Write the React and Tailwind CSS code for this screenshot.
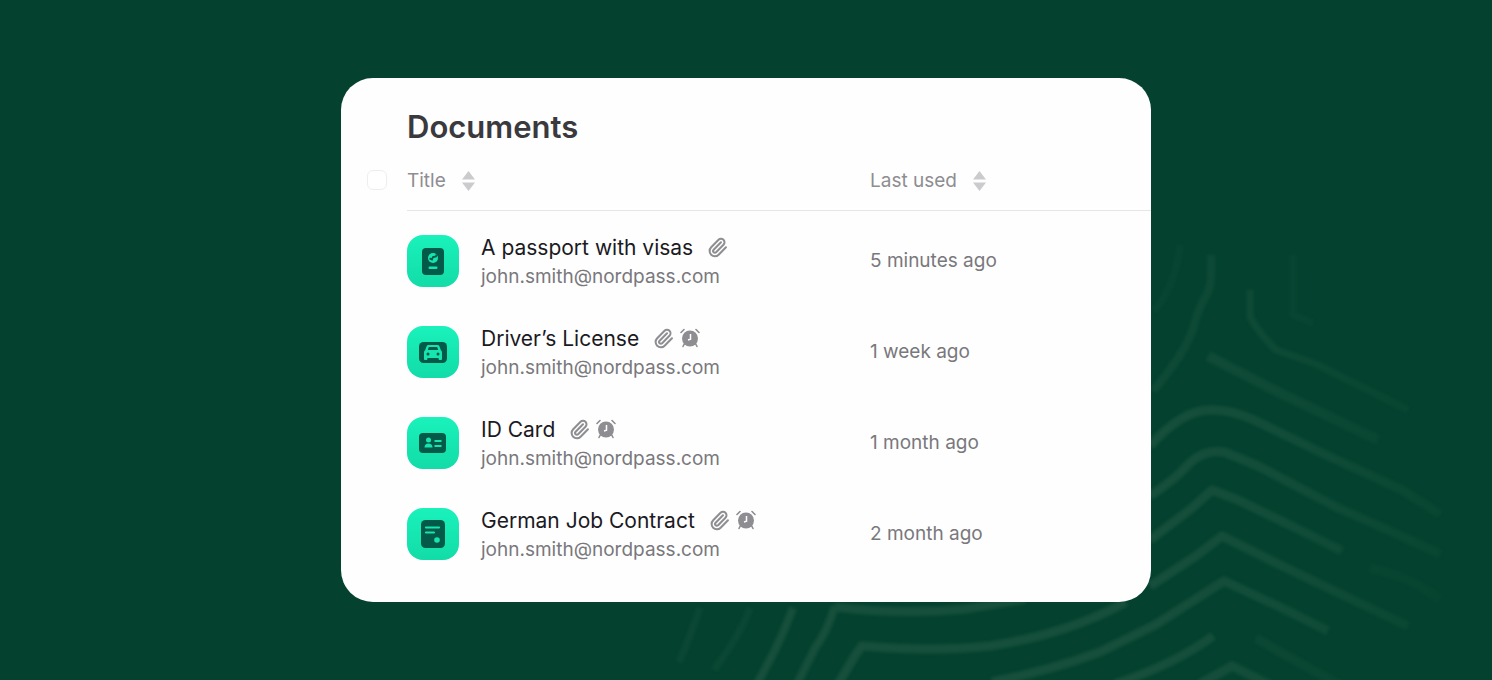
import React from 'react';
import { Paperclip } from 'lucide-react';

const documents = [
    { id: 1, kind: 'passport', title: 'A passport with visas', email: 'john.smith@nordpass.com', lastUsed: '5 minutes ago', reminder: false },
    { id: 2, kind: 'license', title: 'Driver’s License', email: 'john.smith@nordpass.com', lastUsed: '1 week ago', reminder: true },
    { id: 3, kind: 'id', title: 'ID Card', email: 'john.smith@nordpass.com', lastUsed: '1 month ago', reminder: true },
    { id: 4, kind: 'contract', title: 'German Job Contract', email: 'john.smith@nordpass.com', lastUsed: '2 month ago', reminder: true },
];

const glyphs = {
    passport: (
        <>
            <rect x="15" y="13" width="22" height="27" rx="4" fill="#045a49" />
            <circle cx="26" cy="23" r="5" fill="#17e5b0" />
            <path d="M22.6 23.4l2.4 1.2 1-2.6 3-.6.6-2" fill="none" stroke="#045a49" strokeWidth="1.8" />
            <rect x="21.5" y="31.5" width="9" height="2.4" rx="1.2" fill="#17e5b0" />
        </>
    ),
    license: (
        <>
            <rect x="12" y="16" width="28" height="21" rx="4.5" fill="#045a49" />
            <path
                fillRule="evenodd"
                fill="#17e5b0"
                d="M21.5 19h9a2 2 0 0 1 1.9 1.3l1.5 4c.8.5 1.1 1.2 1.1 2.2V33a1 1 0 0 1-1 1h-1.4a1 1 0 0 1-1-1v-1H20.4v1a1 1 0 0 1-1 1H18a1 1 0 0 1-1-1v-6.5c0-1 .3-1.7 1.1-2.2l1.5-4A2 2 0 0 1 21.5 19zm.3 2-1 3h10.4l-1-3zM21 26.5a1.5 1.5 0 1 0 0 3 1.5 1.5 0 0 0 0-3zm10 0a1.5 1.5 0 1 0 0 3 1.5 1.5 0 0 0 0-3z"
            />
        </>
    ),
    id: (
        <>
            <rect x="12" y="16" width="27" height="20" rx="4" fill="#045a49" />
            <circle cx="21.5" cy="23" r="2.5" fill="#17e5b0" />
            <path d="M17.5 30.5c0-2.6 1.6-4 4-4s4 1.4 4 4z" fill="#17e5b0" />
            <path d="M27.5 24h7M27.5 29h7" stroke="#17e5b0" strokeWidth="2.2" />
        </>
    ),
    contract: (
        <>
            <rect x="14" y="12" width="24" height="28" rx="4.5" fill="#045a49" />
            <path d="M19 19.5h13M19 24.5h8" stroke="#17e5b0" strokeWidth="2.2" strokeLinecap="round" />
            <circle cx="30" cy="32" r="2.8" fill="#17e5b0" />
        </>
    ),
};

const DocumentIcon = ({ kind }) => (
    <div className="size-[52px] shrink-0 rounded-2xl bg-gradient-to-b from-[#1af2bb] to-[#12dca8]">
        <svg viewBox="0 0 52 52" className="size-full" aria-hidden="true">
            {glyphs[kind]}
        </svg>
    </div>
);

const AlarmIcon = () => (
    <svg viewBox="0 0 20 20" className="size-5" aria-hidden="true">
        <circle cx="10" cy="10.5" r="8" fill="#8e8d91" />
        <path d="M4.5 15.5 3 18.5M15.5 15.5l1.5 3M1 4.5l3-3M19 4.5l-3-3" stroke="#8e8d91" strokeWidth="1.6" strokeLinecap="round" />
        <path d="M10.5 6v5.3L8 12" fill="none" stroke="#fff" strokeWidth="1.5" />
    </svg>
);

const SortButton = ({ label }) => (
    <button type="button" className="flex items-center gap-4 text-[19px] leading-6 text-[#8e8d91]">
        {label}
        <svg viewBox="0 0 13 20" className="h-5 w-[13px]" fill="#cbcacd" aria-hidden="true">
            <path d="M6.5 0 13 8.5H0zM6.5 20 0 11.5h13z" />
        </svg>
    </button>
);

const DocumentRow = ({ doc }) => (
    <tr className="h-[91px]">
        <td />
        <td>
            <div className="flex items-center gap-[22px]">
                <DocumentIcon kind={doc.kind} />
                <div className="pt-0.5">
                    <div className="flex items-center gap-3.5">
                        <span className="text-[21px] leading-[29px] text-[#1b1a1e]">{doc.title}</span>
                        <div className="flex items-center gap-1.5 text-[#8e8d91]">
                            <Paperclip size={21} strokeWidth={2.3} aria-hidden="true" />
                            {doc.reminder && <AlarmIcon />}
                        </div>
                    </div>
                    <div className="text-[19px] leading-[29px] text-[#79787c]">{doc.email}</div>
                </div>
            </div>
        </td>
        <td className="pt-0.5 text-[19px] text-[#79787c]">{doc.lastUsed}</td>
    </tr>
);

// Contour lines fading out towards the right edge
const Contours = () => (
    <svg viewBox="640 240 852 440" className="absolute right-0 bottom-0 h-[440px] w-[852px]" aria-hidden="true">
        <defs>
            <filter id="soft" x="640" y="240" width="852" height="450" filterUnits="userSpaceOnUse" colorInterpolationFilters="sRGB">
                <feGaussianBlur stdDeviation="1.6" />
            </filter>
            <linearGradient id="fade" x1="1150" y1="0" x2="1450" y2="0" gradientUnits="userSpaceOnUse">
                <stop offset="0" stopColor="#164f3b" />
                <stop offset="0.4" stopColor="#124d39" />
                <stop offset="1" stopColor="#084631" />
            </linearGradient>
        </defs>
        <g fill="none" stroke="url(#fade)" strokeWidth="9" strokeLinejoin="round" filter="url(#soft)">
            <path d="M1211 255v22q0 12-8 24-6 12-10 28-8 24-40 62" strokeWidth="8" opacity="0.6" />
            <path d="M1180 245q-4 40-26 66" strokeWidth="7" opacity="0.25" />
            <path d="M1250 290v26q6 14 26 34l40 14 92 46" strokeWidth="7" opacity="0.7" />
            <path d="M1293 255v60l20 8" strokeWidth="7" opacity="0.35" />
            <path d="M1208 356l70 36 100 48" strokeWidth="10" opacity="0.7" />
            <path d="M1150 446q32-36 60-36 20-1 44 10l70 34 78 36 38 24" />
            <path d="M1150 496q24-16 36-29 16-18 38-15 20 8 34 14l80 42 50 22 52 24" />
            <path d="M1150 540l42-32 20-18 26 10 70 34 34 17" />
            <path d="M1150 586l46-30 26-20 56 28 92 44 38 18" />
            <path d="M992 682q60-12 108-30l55-27 69-44 60 28 44 22" />
            <path d="M1115 684q60-20 98-48" />
            <path d="M1200 684l32-18 40 20" />
            <path d="M1256 638q48 28 86 48M1370 568q40 8 70 32" opacity="0.5" />
        </g>
        <g fill="none" stroke="#164f3b" strokeWidth="9" filter="url(#soft)">
            <path d="M700 608q-8 24-21 54M750 608q-8 24-36 62" strokeWidth="7" opacity="0.4" />
            <path d="M793 608q-10 26-20 46l-16 30M835 606q-8 26-20 42l-18 36" strokeWidth="8" />
            <path d="M835 607q66 8 130 2l60-10" />
            <path d="M838 684l18-30 6-8q70 6 128 0 78-12 136-44" />
        </g>
    </svg>
);

const App = () => {
    return (
        <main className="relative flex min-h-screen items-center justify-center overflow-hidden bg-[#04422f] font-['Inter',sans-serif]">
            <Contours />

            {/* Documents card */}
            <section className="relative w-full max-w-[810px] rounded-[32px] bg-[#fefefe] pt-7 pb-[23px]">
                <h1 className="pl-[66px] text-[31px] leading-[42px] font-semibold text-[#3a393d]">Documents</h1>
                <table className="w-full table-fixed text-left">
                    <colgroup>
                        <col className="w-[66px]" />
                        <col className="w-[463px]" />
                        <col />
                    </colgroup>
                    <thead>
                        <tr className="h-[62px]">
                            <th className="pt-0.5 pl-[26px] font-normal">
                                <input
                                    type="checkbox"
                                    aria-label="Select all documents"
                                    className="block size-5 appearance-none rounded-md border border-[#efedf2] bg-white"
                                />
                            </th>
                            <th className="border-b border-[#e6e5e8] pt-1 font-normal">
                                <SortButton label="Title" />
                            </th>
                            <th className="border-b border-[#e6e5e8] pt-1 font-normal">
                                <SortButton label="Last used" />
                            </th>
                        </tr>
                    </thead>
                    <tbody className="before:block before:h-[5px]">
                        {documents.map((doc) => (
                            <DocumentRow key={doc.id} doc={doc} />
                        ))}
                    </tbody>
                </table>
            </section>
        </main>
    );
};

export default App;
